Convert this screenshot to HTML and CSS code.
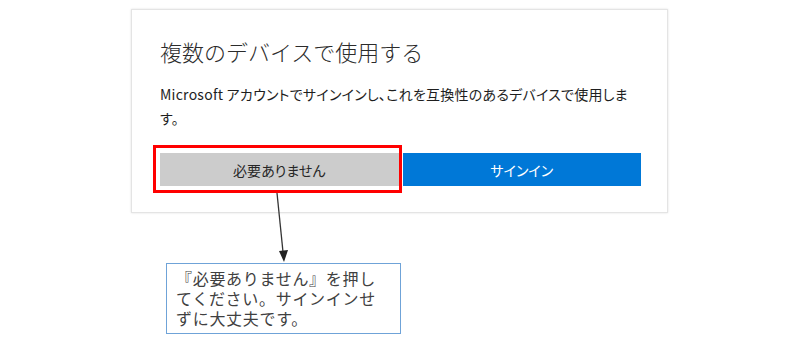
FILE: index.html
```html
<!DOCTYPE html>
<html lang="ja">
<head>
    <meta charset="UTF-8">
    <title>複数のデバイスで使用する</title>
    <link rel="stylesheet" href="styles.css">
</head>
<body>
    <div class="stage">
        <section class="dialog">
            <h1 class="dialog-title">複数のデバイスで使用する</h1>
            <p class="dialog-text">Microsoft アカウントでサインインし、これを互換性のあるデバイスで使用します。</p>
            <div class="dialog-buttons">
                <button class="btn btn-skip">必要ありません</button>
                <button class="btn btn-signin">サインイン</button>
            </div>
        </section>

        <div class="highlight"></div>
        <svg class="arrow" width="30" height="80" viewBox="0 0 30 80">
            <line x1="7" y1="3" x2="13" y2="62" stroke="#333" stroke-width="1.3"/>
            <polygon points="9,61 18,60 14,72" fill="#222"/>
        </svg>

        <div class="note">『必要ありません』を押してください。サインインせずに大丈夫です。</div>
    </div>
</body>
</html>
```

FILE: styles.css
```css
* {
    margin: 0;
    padding: 0;
    box-sizing: border-box;
}

body {
    background: #fff;
    font-family: "Noto Sans CJK JP", "Noto Sans", sans-serif;
    color: #222;
}

.stage {
    position: relative;
    width: 800px;
    height: 352px;
    padding-top: 9px;
}

.dialog {
    margin-left: 131px;
    width: 537px;
    padding: 26px 26px 26px 28px;
    border: 1px solid #e4e4e4;
    box-shadow: 0 0 2px rgba(0, 0, 0, 0.12);
    background: #fff;
}

.dialog-title {
    font-size: 22px;
    font-weight: 300;
    line-height: 30px;
    color: #2b2b2b;
}

.dialog-text {
    margin-top: 16px;
    font-size: 14px;
    line-height: 24px;
    width: 470px;
    letter-spacing: 0.25px;
    font-feature-settings: "palt";
    color: #1e1e1e;
}

.dialog-buttons {
    margin-top: 23px;
    display: grid;
    grid-template-columns: 1fr 1fr;
    gap: 4px;
}

.btn {
    height: 33px;
    border: none;
    font-family: inherit;
    font-size: 14px;
    font-feature-settings: "palt";
}

.btn-skip {
    background: #cccccc;
    color: #262626;
}

.btn-signin {
    background: #0078d7;
    color: #fff;
}

.highlight {
    position: absolute;
    left: 153px;
    top: 145px;
    width: 249px;
    height: 48px;
    border: 3px solid #ff0000;
}

.arrow {
    position: absolute;
    left: 270px;
    top: 190px;
}

.note {
    margin: 50px 0 0 166px;
    width: 235px;
    height: 71px;
    padding: 4px 14px 0 9px;
    border: 1.5px solid #6fa3d8;
    font-size: 16px;
    line-height: 20px;
    letter-spacing: 0.7px;
    color: #404040;
}
```
